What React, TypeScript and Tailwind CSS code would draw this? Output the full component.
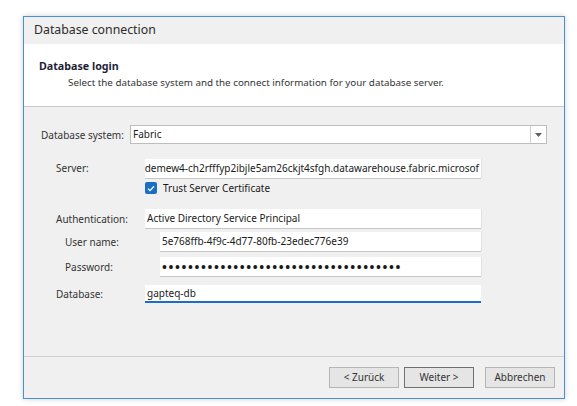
export default function App() {
  const font = { fontFamily: '"Noto Sans", "Liberation Sans", sans-serif' };
  const input =
    "h-[19px] bg-white shadow-[0_1px_0_#c6c6c6,1px_0_0_#e0e0e0] flex items-center px-[2px] text-[10px] text-[#1a1a1a] overflow-hidden whitespace-nowrap";
  const label = "text-[10px] text-[#333] leading-[14px] whitespace-nowrap";

  return (
    <div className="w-[577px] h-[406px] bg-white pt-[16px] pl-[23px]" style={font}>
      <div className="w-[542px] h-[383px] border border-[#4a8fd6] bg-[#f0f0f0] flex flex-col shadow-[0_0_6px_rgba(0,0,0,0.18)]">
        <div className="h-[27px] flex items-center pl-[10px] text-[12.3px] text-[#2b2b2b]">
          Database connection
        </div>
        <div className="h-[63px] bg-white border-b border-[#c9c9c9] pl-[15px] pt-[15px]">
          <div className="text-[10.7px] font-bold text-[#1f1f3a] leading-[15px]">Database login</div>
          <div className="text-[9.8px] text-[#333] pl-[29px] leading-[15px] mt-[1px]">
            Select the database system and the connect information for your database server.
          </div>
        </div>

        <div className="flex-1 flex flex-col">
          <div className="flex items-center mt-[18px] pl-[17px]">
            <div className={`${label} w-[89px]`}>Database system:</div>
            <div className="w-[417px] h-[19px] bg-white border border-[#bdbdbd] flex items-center">
              <div className="flex-1 pl-[2px] text-[10px] text-[#1a1a1a]">Fabric</div>
              <div className="w-[16px] h-full border-l border-[#d0d0d0] flex items-center justify-center">
                <svg width="7" height="4" viewBox="0 0 7 4">
                  <path d="M0 0h7L3.5 4z" fill="#606060" />
                </svg>
              </div>
            </div>
          </div>

          <div className="flex items-start mt-[15px] pl-[32px]">
            <div className={`${label} w-[89px] pt-[2px]`}>Server:</div>
            <div className={`${input} w-[336px] justify-end text-[10.3px]`}>
              <span>4ksqnjdemew4-ch2rfffyp2ibjle5am26ckjt4sfgh.datawarehouse.fabric.microsof</span>
            </div>
          </div>

          <div className="flex items-center mt-[4px] pl-[121px] gap-[6px]">
            <div className="w-[12px] h-[12px] rounded-[2px] bg-[#1a6fc4] flex items-center justify-center">
              <svg width="8" height="7" viewBox="0 0 8 7">
                <path d="M1 3.6l2 2L7 1.2" stroke="#fff" strokeWidth="1.3" fill="none" />
              </svg>
            </div>
            <div className="text-[10px] text-[#1a1a1a] leading-[12px]">Trust Server Certificate</div>
          </div>

          <div className="flex items-center mt-[15px] pl-[32px]">
            <div className={`${label} w-[89px]`}>Authentication:</div>
            <div className={`${input} w-[336px] h-[18px]`}>Active Directory Service Principal</div>
          </div>

          <div className="flex items-center mt-[4px] pl-[41px]">
            <div className={`${label} w-[95px]`}>User name:</div>
            <div className={`${input} w-[321px]`}>5e768ffb-4f9c-4d77-80fb-23edec776e39</div>
          </div>

          <div className="flex items-center mt-[6px] pl-[41px]">
            <div className={`${label} w-[95px]`}>Password:</div>
            <div className={`${input} w-[321px] h-[18px] text-[13px] font-bold tracking-[1.6px] leading-[18px]`}>
              {"•".repeat(37)}
            </div>
          </div>

          <div className="flex items-center mt-[9px] pl-[32px]">
            <div className={`${label} w-[89px]`}>Database:</div>
            <div className="w-[336px] h-[18px] bg-white border-b-2 border-[#1a6fc4] flex items-center px-[2px] text-[10px] text-[#1a1a1a]">
              gapteq-db
            </div>
          </div>
        </div>

        <div className="h-[42px] border-t border-[#cfcfcf] flex items-center justify-end pr-[9px] gap-[5px] pb-[1px]">
          <button className="w-[70px] h-[21px] bg-[#e5e5e5] border border-[#b5b5b5] text-[10px] text-[#333]">
            &lt; Zurück
          </button>
          <button className="w-[70px] h-[21px] bg-[#e5e5e5] border border-[#707070] text-[10px] text-[#333] mr-[6px]">
            Weiter &gt;
          </button>
          <button className="w-[70px] h-[21px] bg-[#e5e5e5] border border-[#b5b5b5] text-[10px] text-[#333]">
            Abbrechen
          </button>
        </div>
      </div>
    </div>
  );
}
